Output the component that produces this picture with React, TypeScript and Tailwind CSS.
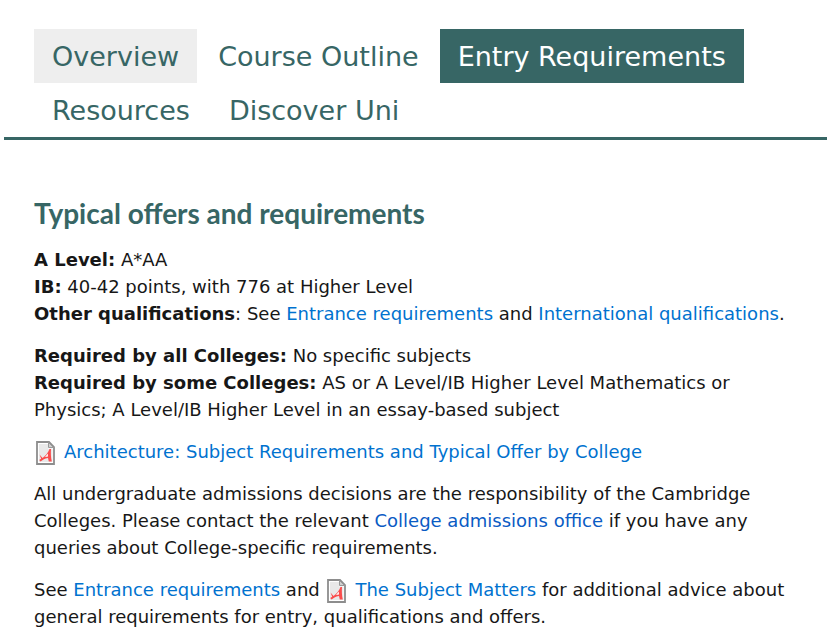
import React from "react";

const tabs = [
  { label: "Overview", style: "bg-[#eeeeee] text-[#376665]" },
  { label: "Course Outline", style: "text-[#376665]" },
  { label: "Entry Requirements", style: "bg-[#376665] text-white" },
  { label: "Resources", style: "text-[#376665]" },
  { label: "Discover Uni", style: "text-[#376665]" },
];

function Link({ children, color = "text-[#0072cf]" }: { children: React.ReactNode; color?: string }) {
  return <a href="#" className={color}>{children}</a>;
}

function PdfIcon() {
  return (
    <svg viewBox="0 0 20 24" className="mr-2 ml-0.5 inline-block h-6 w-5 align-[-7px]" aria-hidden="true">
      <path d="M1 1h12l5 5v17H1z" fill="#fff" stroke="#8d8d8d" strokeWidth="1.8" />
      <path d="M3 3h9v4.500h4.500V21H3z" fill="#e9e9e9" />
      <path d="M12.500 1.500v5h5z" fill="#d0d0d0" stroke="#999" />
      <path d="M3.500 13.500l3 3.500c3-2 5.500-5 7-9h1.500c-.3 4-.2 8 .8 12.500h-3l-.8-3.500c-1.800.2-3 .6-4.500 1.500L4.500 20.500 3.200 19l2-1.300z" fill="#fa4d4d" />
      <path d="M9 16l2.800-3.500.2 3z" fill="#fff" />
    </svg>
  );
}

export default function App() {
  return (
    <div className="bg-white pt-[29px] pr-[5px] pl-1 font-['DejaVu_Sans',Verdana,sans-serif] text-[#171717]">
      <nav className="border-b-[3px] border-[#376665] pl-[30px]">
        <ul className="flex flex-wrap gap-x-[3px]">
          {tabs.map((tab) => (
            <li key={tab.label}>
              <a href="#" className={`block px-[18px] pt-0.5 text-[27px] leading-[52px] ${tab.style}`}>{tab.label}</a>
            </li>
          ))}
        </ul>
      </nav>
      <main className="space-y-4 pt-14 pr-6 pl-[30px] text-[18px] leading-[27px] [&>p+p]:-mt-px">
        <h2 className="font-['Lato',sans-serif] text-[28px] leading-[34px] font-bold text-[#376665]">Typical offers and requirements</h2>
        <p>
          <b>A Level:</b> A*AA<br />
          <b>IB:</b> 40-42 points, with 776 at Higher Level<br />
          <b>Other qualifications</b>: See <Link>Entrance requirements</Link> and <Link>International qualifications</Link>.
        </p>
        <p>
          <b>Required by all Colleges:</b> No specific subjects<br />
          <b>Required by some Colleges:</b> AS or A Level/IB Higher Level Mathematics or Physics; A Level/IB Higher Level in an essay-based subject
        </p>
        <p><PdfIcon /><Link>Architecture: Subject Requirements and Typical Offer by College</Link></p>
        <p>All undergraduate admissions decisions are the responsibility of the Cambridge Colleges. Please contact the relevant <Link color="text-[#0a5bc4]">College admissions office</Link> if you have any queries about College-specific requirements.</p>
        <p>See <Link>Entrance requirements</Link> and <PdfIcon /><Link>The Subject Matters</Link> for additional advice about general requirements for entry, qualifications and offers.</p>
      </main>
    </div>
  );
}
